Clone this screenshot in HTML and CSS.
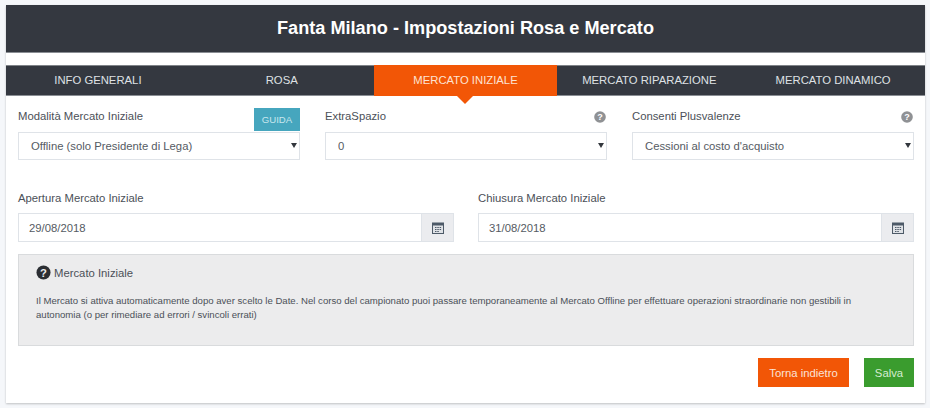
FILE: index.html
```html
<!DOCTYPE html>
<html lang="it">
<head>
<meta charset="utf-8">
<title>Fanta Milano</title>
<link rel="stylesheet" href="styles.css">
</head>
<body>
<main class="card">
  <h1 class="title">Fanta Milano - Impostazioni Rosa e Mercato</h1>
  <nav class="tabs">
    <a class="tab">INFO GENERALI</a>
    <a class="tab">ROSA</a>
    <a class="tab active">MERCATO INIZIALE</a>
    <a class="tab">MERCATO RIPARAZIONE</a>
    <a class="tab">MERCATO DINAMICO</a>
  </nav>
  <div class="content">
    <div class="row three">
      <div class="field">
        <div class="field-head">
          <label class="label">Modalità Mercato Iniziale</label>
          <span class="guida">GUIDA</span>
        </div>
        <div class="select-wrap"><select class="control select"><option>Offline (solo Presidente di Lega)</option></select></div>
      </div>
      <div class="field">
        <div class="field-head">
          <label class="label">ExtraSpazio</label>
          <svg class="hint" viewBox="0 0 16 16"><circle cx="8" cy="8" r="5.8" fill="#8f9194"/><text x="8" y="11" text-anchor="middle" class="hint-q">?</text></svg>
        </div>
        <div class="select-wrap"><select class="control select"><option>0</option></select></div>
      </div>
      <div class="field">
        <div class="field-head">
          <label class="label">Consenti Plusvalenze</label>
          <svg class="hint" viewBox="0 0 16 16"><circle cx="8" cy="8" r="5.8" fill="#8f9194"/><text x="8" y="11" text-anchor="middle" class="hint-q">?</text></svg>
        </div>
        <div class="select-wrap"><select class="control select"><option>Cessioni al costo d'acquisto</option></select></div>
      </div>
    </div>
    <div class="row two">
      <div class="field">
        <label class="label date-label">Apertura Mercato Iniziale</label>
        <div class="group">
          <input class="control input" value="29/08/2018">
          <span class="addon">
            <svg class="cal" viewBox="0 0 12 12"><rect x="0" y="0.5" width="12" height="11.500" fill="#4d5a68"/><rect x="1" y="3.500" width="10" height="7.500" fill="#dfe2e6"/><path d="M3 5h1.500v1H3zM5.300 5h1.500v1H5.300zM7.600 5h1.500v1H7.600zM3 7h1.500v1H3zM5.300 7h1.500v1H5.300zM7.600 7h1.500v1H7.600zM3 9h1.500v1H3zM5.300 9h1.500v1H5.300z" fill="#4d5a68"/></svg>
          </span>
        </div>
      </div>
      <div class="field">
        <label class="label date-label">Chiusura Mercato Iniziale</label>
        <div class="group">
          <input class="control input" value="31/08/2018">
          <span class="addon">
            <svg class="cal" viewBox="0 0 12 12"><rect x="0" y="0.5" width="12" height="11.500" fill="#4d5a68"/><rect x="1" y="3.500" width="10" height="7.500" fill="#dfe2e6"/><path d="M3 5h1.500v1H3zM5.300 5h1.500v1H5.300zM7.600 5h1.500v1H7.600zM3 7h1.500v1H3zM5.300 7h1.500v1H5.300zM7.600 7h1.500v1H7.600zM3 9h1.500v1H3zM5.300 9h1.500v1H5.300z" fill="#4d5a68"/></svg>
          </span>
        </div>
      </div>
    </div>
    <section class="note">
      <h2 class="note-title">
        <svg class="note-icon" viewBox="0 0 16 16"><circle cx="8" cy="8" r="7.500" fill="#2b2e33"/><text x="8" y="12.500" text-anchor="middle" class="note-q">?</text></svg>
        Mercato Iniziale
      </h2>
      <p class="note-text">Il Mercato si attiva automaticamente dopo aver scelto le Date. Nel corso del campionato puoi passare temporaneamente al Mercato Offline per effettuare operazioni straordinarie non gestibili in autonomia (o per rimediare ad errori / svincoli errati)</p>
    </section>
    <div class="actions">
      <button class="btn back">Torna indietro</button>
      <button class="btn save">Salva</button>
    </div>
  </div>
</main>
</body>
</html>
```

FILE: styles.css
```css
* { box-sizing: border-box; }
html, body { height: 100%; }
body {
  margin: 0;
  padding: 5px 5px 0 6px;
  background: #f5f7fa;
  font-family: "Liberation Sans", Arial, sans-serif;
  color: #4b5058;
  overflow: hidden;
}
.card {
  width: 919px;
  height: 398px;
  background: #fff;
  box-shadow: 0 1px 2px rgba(0,0,0,.22);
}
.title {
  margin: 0;
  height: 48px;
  background: #343840;
  border-bottom: 1px solid #8a8e94;
  color: #fff;
  font-size: 18.15px;
  font-weight: 700;
  line-height: 47px;
  text-align: center;
}
.tabs {
  display: grid;
  grid-template-columns: repeat(5, 1fr);
  margin-top: 12px;
  height: 31px;
  background: #343840;
  border-top: 1px solid #7f8388;
  border-bottom: 1px solid #8a8e94;
}
.tab {
  position: relative;
  color: #dfe1e4;
  font-size: 11.3px;
  line-height: 28px;
  text-align: center;
}
.tab.active {
  background: #f25606;
  color: #fde3d2;
  margin: -1px 0 -1px;
  line-height: 30px;
}
.tab.active::after {
  content: "";
  position: absolute;
  left: 50%;
  top: 100%;
  margin-left: -8px;
  border: 8px solid transparent;
  border-bottom: 0;
  border-top-color: #f25606;
}
.content { padding: 0 11px 0 12px; }
.row { display: grid; }
.three { grid-template-columns: repeat(3, 282px); column-gap: 25px; padding-top: 12px; }
.two { grid-template-columns: 436px 436px; column-gap: 24px; margin-top: 31px; }
.field { min-width: 0; }
.field-head {
  display: flex;
  justify-content: space-between;
  align-items: center;
  height: 24px;
}
.label { font-size: 11.3px; line-height: 16px; color: #4b5058; }
.field-head .label { margin-top: -8px; }
.date-label { display: block; height: 15px; line-height: 15px; margin-bottom: 7px; }
.guida {
  width: 46px;
  height: 23px;
  background: #46a6be;
  color: #c9e6ee;
  font-size: 9.6px;
  line-height: 23px;
  text-align: center;
  margin-bottom: 1px;
}
.hint { width: 16px; height: 16px; margin: -7px -1px 0 0; }
.hint-q { font: 700 9px "Liberation Sans", sans-serif; fill: #fff; }
.select-wrap { position: relative; }
.select-wrap::after {
  content: "";
  position: absolute;
  right: 3px;
  top: 11px;
  border: 3px solid transparent;
  border-bottom: 0;
  border-top: 5px solid #33373d;
}
.control {
  display: block;
  width: 100%;
  height: 28px;
  border: 1px solid #dfe3e8;
  border-radius: 0;
  background: #fff;
  color: #555b63;
  font-family: "Liberation Sans", sans-serif;
  font-size: 11.3px;
  outline: 0;
}
.select { padding: 0 12px; appearance: none; }
.group { display: flex; }
.group .control { flex: 1; min-width: 0; height: 29px; padding: 0 10px; border-right: 0; }
.addon {
  display: flex;
  align-items: center;
  justify-content: center;
  width: 33px;
  height: 29px;
  background: #ebecef;
  border: 1px solid #dfe3e8;
}
.cal { width: 12px; height: 12px; }
.note {
  height: 92px;
  margin-top: 12px;
  padding: 10px 40px 11px 17px;
  background: #ececed;
  border: 1px solid #d9dbdd;
}
.note-title {
  display: flex;
  align-items: center;
  gap: 3px;
  margin: 0;
  height: 15px;
  font-size: 11.3px;
  font-weight: 400;
  color: #4b5058;
}
.note-icon { width: 15px; height: 15px; }
.note-q { font: 700 12px "Liberation Sans", sans-serif; fill: #ececed; }
.note-text {
  margin: 14px 0 0;
  font-size: 9.6px;
  line-height: 14px;
  color: #4b5058;
}
.actions {
  display: flex;
  justify-content: flex-end;
  gap: 15px;
  margin-top: 12px;
}
.btn {
  height: 29px;
  border: 0;
  color: #fbe3d6;
  font-family: "Liberation Sans", sans-serif;
  font-size: 11.3px;
  padding: 0;
}
.back { width: 91px; background: #f25606; }
.save { width: 50px; background: #3a9c2e; color: #d5ecd2; }
```
